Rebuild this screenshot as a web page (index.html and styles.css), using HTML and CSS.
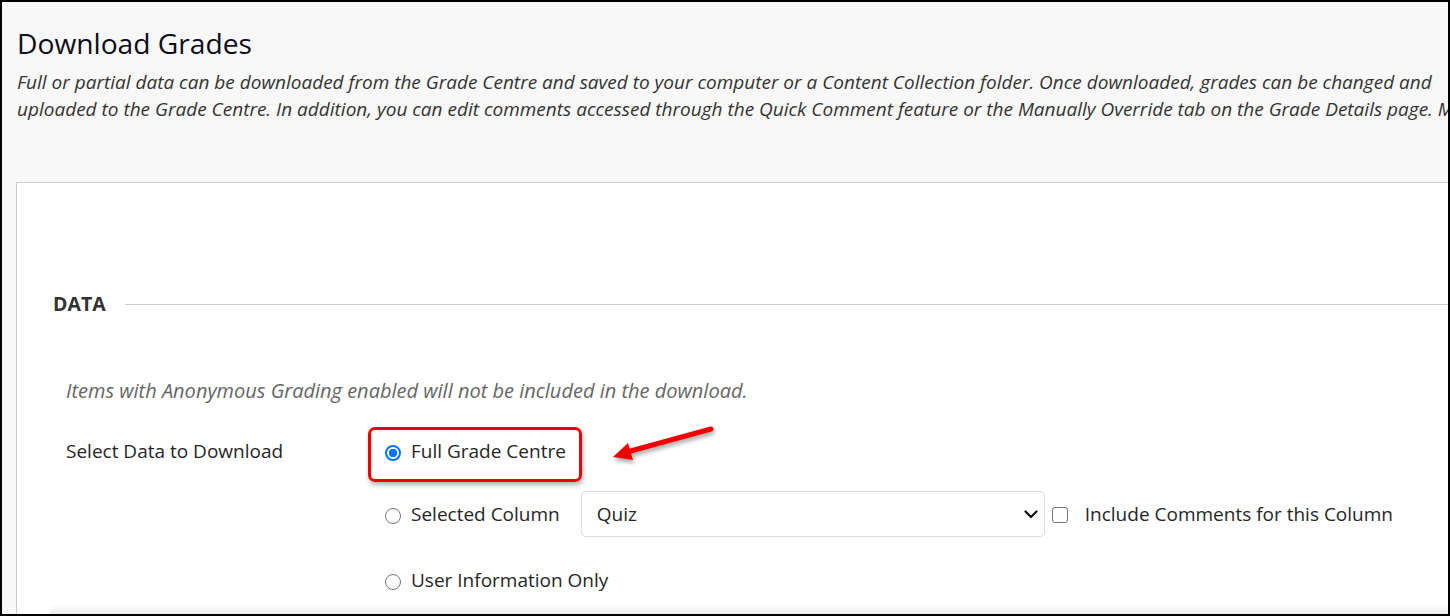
FILE: index.html
```html
<!DOCTYPE html>
<html lang="en">
<head>
<meta charset="utf-8">
<title>Download Grades</title>
<link rel="stylesheet" href="styles.css">
</head>
<body>
<div class="frame">
  <header class="page-head">
    <h1 class="title">Download Grades</h1>
    <p class="intro">Full or partial data can be downloaded from the Grade Centre and saved to your computer or a Content Collection folder. Once downloaded, grades can be changed and<br>uploaded to the Grade Centre. In addition, you can edit comments accessed through the Quick Comment feature or the Manually Override tab on the Grade Details page. <span class="more">More Help</span></p>
  </header>
  <section class="panel">
    <div class="section-head">
      <h2 class="section-title">DATA</h2>
      <span class="rule"></span>
    </div>
    <p class="note">Items with Anonymous Grading enabled will not be included in the download.</p>
    <div class="field">
      <div class="field-label">Select Data to Download</div>
      <div class="options">
        <div class="option opt-full">
          <span class="radio checked"></span>
          <span class="opt-text">Full Grade Centre</span>
          <span class="highlight"></span>
        </div>
        <div class="option opt-col">
          <span class="radio"></span>
          <span class="opt-text">Selected Column</span>
          <div class="select">
            <span>Quiz</span>
            <svg class="chev" width="14" height="9" viewBox="0 0 14 9"><path d="M1.5 1.5 L7 7 L12.5 1.5" fill="none" stroke="#111" stroke-width="2.2" stroke-linecap="round" stroke-linejoin="round"/></svg>
          </div>
          <span class="checkbox"></span>
          <span class="opt-text">Include Comments for this Column</span>
        </div>
        <div class="option opt-user">
          <span class="radio"></span>
          <span class="opt-text">User Information Only</span>
        </div>
      </div>
    </div>
  </section>
  <svg class="arrow" width="120" height="50" viewBox="0 0 120 50">
    <defs>
      <filter id="sh" x="-20%" y="-40%" width="140%" height="180%">
        <feDropShadow dx="1" dy="3" stdDeviation="2" flood-color="#000" flood-opacity="0.35"/>
      </filter>
    </defs>
    <g filter="url(#sh)">
      <path d="M108 10 L24 33" stroke="#f20000" stroke-width="5" stroke-linecap="round"/>
      <path d="M10 38 L25 24 L30 41 Z" fill="#f20000"/>
    </g>
  </svg>
  <div class="bottom-shade"></div>
</div>
</body>
</html>
```

FILE: styles.css
```css
html, body {
  margin: 0;
  padding: 0;
  background: #fff;
}

.frame {
  position: relative;
  width: 1450px;
  height: 616px;
  box-sizing: border-box;
  border: 2px solid #000;
  background: #f8f8f8;
  overflow: hidden;
  font-family: "Open Sans", "Liberation Sans", sans-serif;
  color: #262626;
}

.page-head {
  padding: 22px 0 0 15px;
}

.title {
  margin: 0;
  font-size: 28.2px;
  font-weight: 400;
  line-height: 38px;
  color: #0c0c1a;
}

.intro {
  margin: 7px 0 0;
  white-space: nowrap;
  font-size: 19px;
  font-style: italic;
  line-height: 27px;
  color: #333;
}

.more {
  color: #333;
}

.panel {
  margin: 59px -40px 0 14px;
  background: #fff;
  border: 1px solid #cdcdcd;
  height: 520px;
  padding: 107px 0 0 36px;
}

.section-head {
  display: flex;
  align-items: center;
  gap: 19px;
}

.section-title {
  margin: 0;
  font-size: 19.5px;
  font-weight: 700;
  line-height: 28px;
  color: #333;
}

.rule {
  flex: 1;
  height: 1px;
  background: #cdcdcd;
}

.note {
  margin: 59px 0 0 13px;
  font-size: 20px;
  font-style: italic;
  line-height: 28px;
  color: #666;
}

.field {
  display: flex;
  margin: 33px 0 0 13px;
}

.field-label {
  width: 302px;
  font-size: 19px;
  line-height: 26px;
  color: #262626;
}

.options {
  display: flex;
  flex-direction: column;
}

.option {
  position: relative;
  display: flex;
  align-items: center;
  height: 26px;
  font-size: 19px;
  line-height: 26px;
  color: #262626;
}

.opt-col {
  margin-top: 37px;
}

.opt-user {
  margin-top: 40px;
}

.radio {
  width: 16px;
  height: 16px;
  box-sizing: border-box;
  border: 1.5px solid #767676;
  border-radius: 50%;
  margin: 3px 10px 0 17px;
  background: #fff;
  flex: none;
}

.radio.checked {
  border: 2px solid #0075ff;
  background: radial-gradient(circle, #0075ff 0 4px, #fff 4.5px);
}

.opt-text {
  white-space: nowrap;
}

.select {
  display: flex;
  align-items: center;
  justify-content: space-between;
  width: 464px;
  height: 46px;
  box-sizing: border-box;
  margin-left: 21px;
  padding: 0 6px 0 15px;
  border: 1px solid #dcdcdc;
  border-radius: 5px;
  background: #fff;
  flex: none;
}

.chev {
  margin-top: 1px;
}

.checkbox {
  width: 16px;
  height: 16px;
  box-sizing: border-box;
  border: 1.5px solid #767676;
  border-radius: 3px;
  margin: 1px 17px 0 7px;
  flex: none;
}

.highlight {
  position: absolute;
  left: 0;
  top: -11px;
  width: 214px;
  height: 55px;
  box-sizing: border-box;
  border: 3px solid #f00000;
  border-radius: 7px;
  box-shadow: 1px 3px 5px rgba(0, 0, 0, 0.3);
}

.arrow {
  position: absolute;
  left: 601px;
  top: 417px;
}

.bottom-shade {
  position: absolute;
  left: 48px;
  right: 0;
  bottom: 0;
  height: 10px;
  background: linear-gradient(to bottom, rgba(0, 0, 0, 0), rgba(0, 0, 0, 0.07));
  border-radius: 40px 0 0 0;
}
```
